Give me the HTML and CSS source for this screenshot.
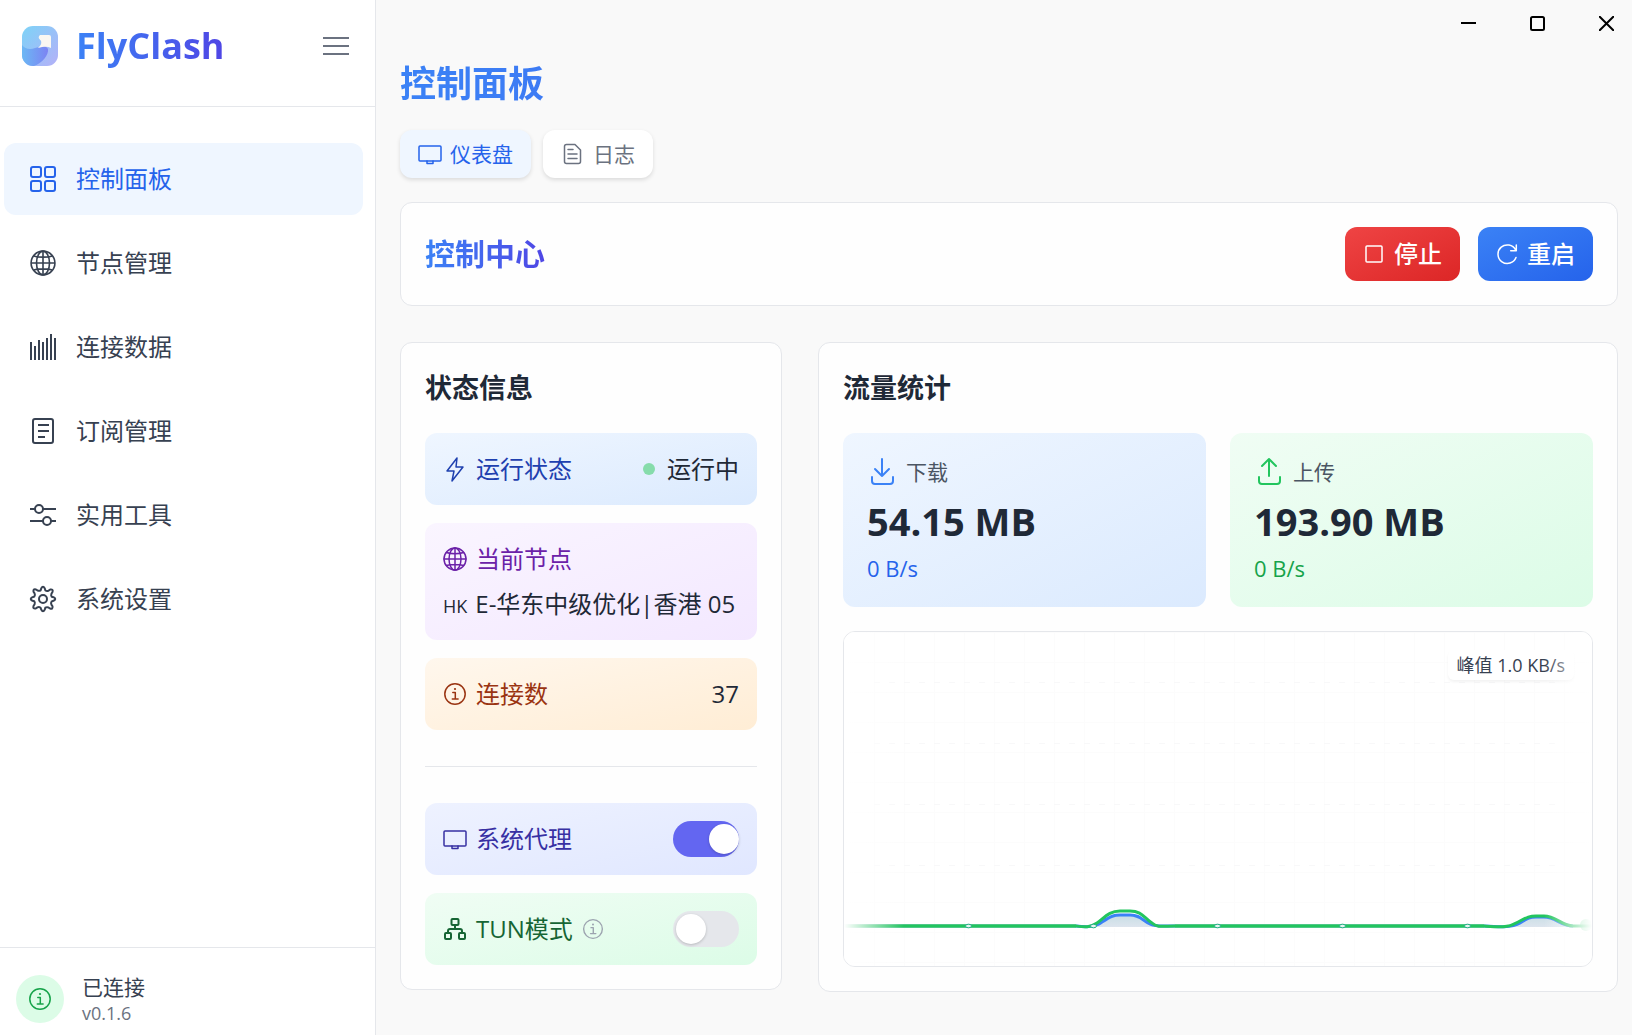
FILE: index.html
```html
<!DOCTYPE html>
<html lang="zh-CN">
<head>
    <meta charset="UTF-8">
    <meta name="viewport" content="width=device-width, initial-scale=1.0">
    <title>FlyClash</title>
    <link rel="stylesheet" href="styles.css">
</head>
<body>
    <!-- общие иконки -->
    <svg class="sprite" aria-hidden="true">
        <symbol id="i-globe" viewBox="0 0 24 24">
            <circle cx="12" cy="12" r="11"/>
            <ellipse cx="12" cy="12" rx="6" ry="11"/>
            <path d="M12 1v22M1 12h22M3.5 5.5c4 1.5 13 1.5 17 0M3.500 18.500c4-1.500 13-1.500 17 0"/>
        </symbol>
        <symbol id="i-info" viewBox="0 0 24 24">
            <circle cx="12" cy="12" r="10.200"/>
            <path d="M9.800 10.500h2.500v6.200M9.300 17h5.800"/>
            <circle class="fill" cx="12" cy="7" r="1.100"/>
        </symbol>
        <symbol id="i-screen" viewBox="0 0 24 24">
            <rect x="1" y="4" width="22" height="15" rx="1"/>
            <path d="M9 19v2.500h6V19"/>
        </symbol>
    </svg>

    <div class="app">
        <aside class="sidebar">
            <div class="brand">
                <svg class="logo" viewBox="0 0 36 40">
                    <defs>
                        <linearGradient id="logoBg" x1="0" y1="0" x2="1" y2="1">
                            <stop offset="0" stop-color="#7dd3f7"/>
                            <stop offset="1" stop-color="#b4b0f8"/>
                        </linearGradient>
                        <linearGradient id="logoWave" x1="0" y1="0" x2="1" y2="0">
                            <stop offset="0" stop-color="#6cb8f4"/>
                            <stop offset="1" stop-color="#7c83f3"/>
                        </linearGradient>
                        <clipPath id="logoClip"><rect width="36" height="40" rx="11"/></clipPath>
                    </defs>
                    <g clip-path="url(#logoClip)">
                        <rect width="36" height="40" fill="url(#logoBg)"/>
                        <path d="M0 19c3 4 8 5 13 3 5-1 11-3 13 1 1 6-6 14-14 17H0z" fill="url(#logoWave)"/>
                        <path d="M18 9h9q2 0 2 2v11c-4-2-8-1-13 0 2-2 4-4 3-7-1-2-4-3-1-6z" fill="#faf7f2"/>
                    </g>
                </svg>
                <span class="brand-name">FlyClash</span>
                <button class="menu-btn" type="button" aria-label="菜单">
                    <svg viewBox="0 0 26 18"><path d="M0 1h26M0 9h26M0 17h26"/></svg>
                </button>
            </div>

            <nav class="nav">
                <a class="nav-item active" href="#dashboard">
                    <svg class="icon" viewBox="0 0 26 26"><rect x="1" y="1" width="10" height="10" rx="2"/><rect x="15" y="1" width="10" height="10" rx="2"/><rect x="1" y="15" width="10" height="10" rx="2"/><rect x="15" y="15" width="10" height="10" rx="2"/></svg>
                    控制面板
                </a>
                <a class="nav-item" href="#nodes">
                    <svg class="icon"><use href="#i-globe"/></svg>
                    节点管理
                </a>
                <a class="nav-item" href="#connections">
                    <svg class="icon" viewBox="0 0 26 26"><path d="M1 8v18M5 12v14M9 6v20M13 8v18M17 4v22M21 0v26M25 4v22"/></svg>
                    连接数据
                </a>
                <a class="nav-item" href="#subscriptions">
                    <svg class="icon" viewBox="0 0 26 26"><rect x="3" y="1" width="20" height="24" rx="2"/><path d="M8 7h11M8 13h11M8 19h7"/></svg>
                    订阅管理
                </a>
                <a class="nav-item" href="#tools">
                    <svg class="icon" viewBox="0 0 26 26"><path d="M0 7h5M13 7h13M0 19h13M21 19h5"/><circle cx="9" cy="7" r="4"/><circle cx="17" cy="19" r="4"/></svg>
                    实用工具
                </a>
                <a class="nav-item" href="#settings">
                    <svg class="icon" viewBox="0 0 26 26"><circle cx="13" cy="13" r="4"/><path d="M11.200 2.500Q13-1 14.800 2.500L15.400 4.500Q17 5.500 18.600 4.600L20.200 3.500Q23.500 3 22.500 6L21.400 7.800Q20.800 9.300 21.700 10.700L23.500 11.200Q27 13 23.500 14.800L21.700 15.400Q20.600 17 21.400 18.600L22.500 20.200Q23 23.500 20 22.500L18.200 21.400Q16.700 20.800 15.300 21.700L14.800 23.500Q13 27 11.200 23.500L10.600 21.700Q9 20.600 7.400 21.400L5.800 22.500Q2.500 23 3.500 20L4.600 18.200Q5.200 16.700 4.300 15.300L2.500 14.800Q-1 13 2.500 11.200L4.300 10.600Q5.400 9 4.600 7.400L3.500 5.800Q3 2.500 6 3.500L7.800 4.600Q9.300 5.200 10.700 4.300Z"/></svg>
                    系统设置
                </a>
            </nav>

            <div class="sidebar-footer">
                <div class="conn-badge"><svg class="icon"><use href="#i-info"/></svg></div>
                <div>
                    <div class="conn-state">已连接</div>
                    <div class="version">v0.1.6</div>
                </div>
            </div>
        </aside>

        <main class="main">
            <div class="window-controls">
                <button type="button" aria-label="最小化"><svg viewBox="0 0 15 15"><path d="M0 7h15"/></svg></button>
                <button type="button" aria-label="最大化"><svg viewBox="0 0 15 15"><rect x="1" y="1" width="13" height="13" rx="1.500"/></svg></button>
                <button type="button" aria-label="关闭"><svg viewBox="0 0 15 15"><path d="M0 0l15 15M15 0L0 15"/></svg></button>
            </div>

            <h1 class="page-title">控制面板</h1>

            <div class="tabs">
                <button class="tab active" type="button">
                    <svg class="icon"><use href="#i-screen"/></svg>仪表盘
                </button>
                <button class="tab" type="button">
                    <svg class="icon" viewBox="0 0 24 24"><path d="M5.500 2.500h8.500l5.500 5.500v11.500q0 2-2 2h-12q-2 0-2-2v-15q0-2 2-2zM7 7.500h5M7 12h9M7 16.500h9"/></svg>日志
                </button>
            </div>

            <section class="card control-center">
                <h2 class="control-title">控制中心</h2>
                <div class="actions">
                    <button class="btn btn-stop" type="button">
                        <svg class="icon" viewBox="0 0 22 22"><rect x="3" y="3" width="16" height="16" rx="1"/></svg>停止
                    </button>
                    <button class="btn btn-restart" type="button">
                        <svg class="icon" viewBox="0 0 22 22"><path d="M20 14.500A9.300 9.300 0 1 1 19.600 7M20.300 2v5.700h-5.600"/></svg>重启
                    </button>
                </div>
            </section>

            <div class="panels">
                <section class="card status">
                    <h2 class="card-title">状态信息</h2>
                    <div class="rows">
                        <div class="row blue">
                            <svg class="icon" viewBox="0 0 24 24"><path d="M14 1L4 14h7l-2 10L20 10h-7z"/></svg>
                            <span>运行状态</span>
                            <span class="value"><i class="dot"></i>运行中</span>
                        </div>
                        <div class="row purple">
                            <svg class="icon"><use href="#i-globe"/></svg>
                            <span>当前节点</span>
                            <div class="node-name"><span class="flag">HK</span>E-华东中级优化|香港 05</div>
                        </div>
                        <div class="row orange">
                            <svg class="icon"><use href="#i-info"/></svg>
                            <span>连接数</span>
                            <span class="value">37</span>
                        </div>
                    </div>
                    <hr class="divider">
                    <div class="rows">
                        <div class="row indigo">
                            <svg class="icon"><use href="#i-screen"/></svg>
                            <label for="sysProxy">系统代理</label>
                            <input class="switch" type="checkbox" id="sysProxy" checked>
                        </div>
                        <div class="row green">
                            <svg class="icon bold" viewBox="0 0 24 24"><rect x="8.500" y="2" width="7" height="6" rx="1"/><rect x="2" y="16" width="6" height="6" rx="1"/><rect x="16" y="16" width="6" height="6" rx="1"/><path d="M12 8v4M5 16v-2q0-2 2-2h10q2 0 2 2v2"/></svg>
                            <label for="tunMode">TUN模式</label>
                            <svg class="icon hint"><use href="#i-info"/></svg>
                            <input class="switch" type="checkbox" id="tunMode">
                        </div>
                    </div>
                </section>

                <section class="card traffic">
                    <h2 class="card-title">流量统计</h2>
                    <div class="stats">
                        <div class="stat blue">
                            <div class="stat-label">
                                <svg class="icon" viewBox="0 0 30 30"><path d="M15 2v17M8 12l7 7 7-7M5 20v4q0 3 3 3h15q3 0 3-3v-4"/></svg>下载
                            </div>
                            <div class="stat-total">54.15 MB</div>
                            <div class="stat-speed">0 B/s</div>
                        </div>
                        <div class="stat green">
                            <div class="stat-label">
                                <svg class="icon" viewBox="0 0 30 30"><path d="M15 19V2M8 9l7-7 7 7M5 20v4q0 3 3 3h15q3 0 3-3v-4"/></svg>上传
                            </div>
                            <div class="stat-total">193.90 MB</div>
                            <div class="stat-speed">0 B/s</div>
                        </div>
                    </div>

                    <div class="chart">
                        <svg class="chart-svg" viewBox="0 0 748 334" preserveAspectRatio="none">
                            <defs>
                                <pattern id="grid" width="30" height="30" patternUnits="userSpaceOnUse">
                                    <path d="M0 .5h30M.5 0v30" stroke="#fcfcfc" fill="none"/>
                                </pattern>
                                <linearGradient id="area" x1="0" y1="0" x2="0" y2="1">
                                    <stop offset="0" stop-color="#c6dde4"/>
                                    <stop offset="1" stop-color="#dde5ee"/>
                                </linearGradient>
                                <filter id="glow" x="-5%" y="-100%" width="110%" height="400%">
                                    <feDropShadow dx="0" dy="4" stdDeviation="3" flood-color="#000" flood-opacity=".1"/>
                                </filter>
                            </defs>
                            <rect width="748" height="334" fill="url(#grid)"/>
                            <path class="guides" d="M30 50.500h690M30 111.500h690M30 172.500h690M30 233.500h690"/>
                            <!-- тень отдельно, чтобы не перекрывала заливку -->
                            <path class="line up" filter="url(#glow)" d="M0 294H748"/>
                            <path d="M248 296C262 291 266 282 276 282H286C298 282 302 291 313 296zM665 296C676 292 682 286 690 286H700C710 286 718 294 727 296z" fill="#fff"/>
                            <path d="M248 295C262 291 266 282 276 282H286C298 282 302 291 313 295zM665 295C676 292 682 286 690 286H700C710 286 718 294 727 295z" fill="url(#area)"/>
                            <path class="line edge" d="M0 294H232M331 294H640"/>
                            <path class="line down" d="M232 294C240 295 250 296 258 290C267 284 270 283 276 283H286C296 283 298 288 306 292C311 295 320 294 331 294M640 294C654 295 668 296 676 291C684 286 686 285 692 285H700C712 285 716 294 729 294"/>
                            <path class="line up" d="M0 294H232C240 295 246 296 253 291C262 284 266 279 276 279H286C298 279 300 286 308 291C313 296 320 294 331 294H640C654 295 664 296 672 291C682 286 684 284 692 284H700C712 284 718 294 729 294H748"/>
                            <g class="points">
                                <ellipse cx="124.500" cy="294" rx="3" ry="1.800"/>
                                <ellipse cx="249.500" cy="294" rx="3" ry="1.800"/>
                                <ellipse cx="373.500" cy="294" rx="3" ry="1.800"/>
                                <ellipse cx="498.500" cy="294" rx="3" ry="1.800"/>
                                <ellipse cx="623.500" cy="294" rx="3" ry="1.800"/>
                            </g>
                            <circle cx="742" cy="293" r="6" fill="#22c55e" opacity=".5"/>
                        </svg>
                        <div class="peak">峰值 1.0 KB/s</div>
                    </div>
                </section>
            </div>
        </main>
    </div>
</body>
</html>
```

FILE: styles.css
```css
* { box-sizing: border-box; }
body { margin: 0; font-family: "Open Sans", "Noto Sans CJK SC", sans-serif; font-size: 24px; line-height: 36px; color: #1f2937; background: #f9f9f9; }
h1, h2 { margin: 0; }
button { font: inherit; border: 0; cursor: pointer; }
.sprite { display: none; }
.icon { flex: none; width: 24px; height: 24px; fill: none; stroke: currentColor; stroke-width: 1.5; stroke-linecap: round; stroke-linejoin: round; overflow: visible; }
.fill { fill: currentColor; stroke: none; }

.app { display: flex; height: 100vh; overflow: hidden; }

/* Sidebar */
.sidebar { flex: none; width: 376px; display: flex; flex-direction: column; background: #fff; border-right: 1px solid #e5e7eb; }
.brand { display: flex; align-items: center; padding: 22px 26px 36px 22px; border-bottom: 1px solid #e5e7eb; }
.logo { width: 36px; height: 40px; }
.brand-name { margin-left: 18px; font-size: 36px; line-height: 48px; font-weight: 700; color: transparent; background: linear-gradient(to right, #3b82f6, #4f46e5); background-clip: text; -webkit-background-clip: text; }
.menu-btn { display: flex; margin-left: auto; padding: 0; background: none; }
.menu-btn svg { width: 26px; height: 18px; stroke: #6b7280; stroke-width: 2; }
.nav { flex: 1; display: flex; flex-direction: column; gap: 12px; padding: 36px 12px 0 4px; }
.nav-item { display: flex; align-items: center; gap: 20px; padding: 18px 26px; border-radius: 12px; color: #374151; text-decoration: none; }
.nav-item .icon { width: 26px; height: 26px; stroke-width: 2; stroke-linecap: butt; }
.nav-item use { stroke-width: 1.5; }
.nav-item.active { background: #eff6ff; color: #2563eb; }
.sidebar-footer { display: flex; align-items: center; gap: 18px; padding: 25px 16px 10px; border-top: 1px solid #e5e7eb; }
.conn-badge { display: flex; align-items: center; justify-content: center; width: 48px; height: 48px; border-radius: 50%; background: #dcfce7; color: #16a34a; }
.conn-state { font-size: 21px; line-height: 28px; color: #374151; }
.version { font-size: 18px; line-height: 24px; color: #6b7280; }

/* Main */
.main { flex: 1; min-width: 0; padding: 0 14px 24px 24px; }
.window-controls { display: flex; justify-content: flex-end; gap: 18px; height: 46px; margin-right: -14px; }
.window-controls button { width: 51px; padding: 0; background: none; }
.window-controls svg { display: block; width: 15px; height: 15px; margin: auto; fill: none; stroke: #000; stroke-width: 2; }
.page-title { margin: 14px 0 22px; font-size: 36px; line-height: 48px; font-weight: 700; color: transparent; background: linear-gradient(to right, #3b82f6, #4f46e5); background-clip: text; -webkit-background-clip: text; }
.tabs { display: flex; gap: 12px; margin-bottom: 24px; }
.tab { display: flex; align-items: center; gap: 8px; height: 48px; padding: 0 18px; border-radius: 12px; background: #fff; color: #6b7280; font-size: 21px; box-shadow: 0 2px 4px rgba(0, 0, 0, .12); }
.tab.active { background: #eff6ff; color: #2563eb; }
.card { padding: 24px; background: #fefefe; border: 1px solid #e5e7eb; border-radius: 12px; }
.control-center { display: flex; align-items: center; justify-content: space-between; margin-bottom: 36px; }
.control-title { font-size: 30px; line-height: 42px; font-weight: 700; color: transparent; background: linear-gradient(to right, #3b82f6, #4f46e5); background-clip: text; -webkit-background-clip: text; }
.actions { display: flex; gap: 18px; }
.btn { display: flex; align-items: center; gap: 9px; height: 54px; padding: 0 18px; border-radius: 12px; color: #fff; font-size: 24px; font-weight: 500; }
.btn .icon { width: 22px; height: 22px; }
.btn-stop { background: linear-gradient(to bottom right, #ef4444, #dc2626); }
.btn-restart { background: linear-gradient(to bottom right, #3b82f6, #2563eb); }

.panels { display: grid; grid-template-columns: repeat(3, minmax(0, 1fr)); gap: 36px; align-items: start; }
.traffic { grid-column: span 2; }
.card-title { margin-bottom: 24px; font-size: 27px; line-height: 42px; font-weight: 700; }

/* Status rows */
.rows { display: flex; flex-direction: column; gap: 18px; }
.row { display: flex; flex-wrap: wrap; align-items: center; gap: 9px; padding: 18px; border-radius: 12px; }
.row.blue { background: linear-gradient(to bottom right, #eff6ff, #dbeafe); color: #1e40af; }
.row.purple { background: linear-gradient(to bottom right, #faf5ff, #f3e8ff); color: #6b21a8; }
.row.orange { background: linear-gradient(to bottom right, #fff7ed, #ffedd5); color: #9a3412; }
.row.indigo { background: linear-gradient(to bottom right, #eef2ff, #e0e7ff); color: #3730a3; }
.row.green { background: linear-gradient(to bottom right, #f0fdf4, #dcfce7); color: #166534; }
.row .bold { stroke-width: 2; }
.row .hint { width: 22px; height: 22px; color: #9ca3af; }
.value { display: flex; align-items: center; gap: 12px; margin-left: auto; color: #1f2937; }
.dot { width: 12px; height: 12px; border-radius: 50%; background: #86dcab; }
.node-name { width: 100%; color: #1f2937; white-space: nowrap; }
.flag { margin-right: 8px; font-size: 18px; line-height: 24px; }
.divider { margin: 36px 0; border: 0; border-top: 1px solid #e5e7eb; }
.switch { appearance: none; width: 66px; height: 36px; margin: 0 0 0 auto; padding: 3px; border-radius: 18px; background: #e5e7eb; cursor: pointer; }
.switch::before { content: ""; display: block; width: 30px; height: 30px; border-radius: 50%; background: #fff; box-shadow: 0 1px 3px rgba(0, 0, 0, .2); }
.switch:checked { background: #6366f1; }
.switch:checked::before { margin-left: 33px; }

/* Traffic */
.stats { display: grid; grid-template-columns: 1fr 1fr; gap: 24px; margin-bottom: 24px; }
.stat { padding: 24px; border-radius: 12px; }
.stat.blue { background: linear-gradient(to bottom right, #eff6ff, #dbeafe); }
.stat.green { background: linear-gradient(to bottom right, #f0fdf4, #dcfce7); }
.stat-label { display: flex; align-items: center; gap: 9px; margin-bottom: 10px; font-size: 21px; line-height: 30px; color: #4b5563; }
.stat-label .icon { width: 30px; height: 30px; stroke-width: 2; }
.stat.blue .icon { color: #3b82f6; }
.stat.green .icon { color: #22c55e; }
.stat-total { font-size: 38px; line-height: 48px; font-weight: 700; }
.stat-speed { margin-top: 8px; font-size: 22px; line-height: 30px; }
.stat.blue .stat-speed { color: #2563eb; }
.stat.green .stat-speed { color: #16a34a; }
.chart { position: relative; height: 336px; border: 1px solid #e5e7eb; border-radius: 12px; background: #fff; overflow: hidden; }
.chart-svg { display: block; width: 100%; height: 100%; }
.chart::before, .chart::after { content: ""; position: absolute; top: 0; bottom: 0; z-index: 1; }
.chart::before { left: 0; width: 60px; background: linear-gradient(to right, #fff, rgba(255, 255, 255, 0)); }
.chart::after { right: 0; width: 48px; background: linear-gradient(to left, #fff, rgba(255, 255, 255, 0)); }
.guides { fill: none; stroke: #f8f8f9; stroke-dasharray: 6 9; }
.line { fill: none; stroke-width: 3; }
.line.edge { stroke: #7cc9b4; stroke-width: 4; }
.line.down { stroke: #3b82f6; }
.line.up { stroke: #22c55e; }
.points { fill: #e6f5f0; stroke: #1fae84; stroke-width: 1; }
.peak { position: absolute; top: 18px; right: 18px; padding: 0 9px; border-radius: 6px; background: #fff; box-shadow: 0 2px 3px rgba(0, 0, 0, .05); font-size: 18px; line-height: 30px; color: #374151; }
```
